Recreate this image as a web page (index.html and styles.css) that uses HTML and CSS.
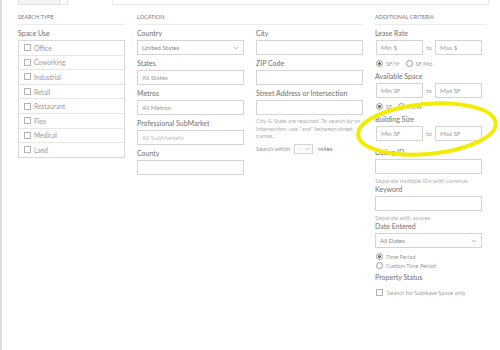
FILE: index.html
```html
<!DOCTYPE html>
<html lang="en">
<head>
  <meta charset="UTF-8">
  <meta name="viewport" content="width=device-width, initial-scale=1.0">
  <title>Property Search</title>
  <link rel="stylesheet" href="styles.css">
</head>
<body>
  <div class="page">
    <!-- Pestañas superiores (recortadas) -->
    <div class="topbar">
      <div class="tab"><span class="tab-fill"></span></div>
      <div class="tab-wide"></div>
    </div>

    <div class="search-form">
      <!-- Tipo de búsqueda -->
      <section class="group">
        <h2 class="group-title">Search Type</h2>
        <label class="field-label">Space Use</label>
        <ul class="check-list">
          <li><span class="checkbox"></span>Office</li>
          <li><span class="checkbox"></span>Coworking</li>
          <li><span class="checkbox"></span>Industrial</li>
          <li><span class="checkbox"></span>Retail</li>
          <li><span class="checkbox"></span>Restaurant</li>
          <li><span class="checkbox"></span>Flex</li>
          <li><span class="checkbox"></span>Medical</li>
          <li><span class="checkbox"></span>Land</li>
        </ul>
      </section>

      <!-- Ubicación -->
      <section class="group group-location">
        <h2 class="group-title">Location</h2>
        <div class="location-cols">
          <div class="col">
            <label class="field-label">Country</label>
            <div class="select field">
              <span>United States</span>
              <svg class="chevron" viewBox="0 0 10 6"><polyline points="1,1 5,5 9,1"/></svg>
            </div>
            <label class="field-label">States</label>
            <input class="field" type="text" placeholder="All States">
            <label class="field-label">Metros</label>
            <input class="field" type="text" placeholder="All Metros">
            <label class="field-label">Professional SubMarket</label>
            <input class="field field-muted" type="text" placeholder="All SubMarkets">
            <label class="field-label">County</label>
            <input class="field" type="text">
          </div>
          <div class="col">
            <label class="field-label">City</label>
            <input class="field" type="text">
            <label class="field-label">ZIP Code</label>
            <input class="field" type="text">
            <label class="field-label">Street Address or Intersection</label>
            <input class="field field-last" type="text">
            <p class="help help-street">City &amp; State are required. To search by an intersection, use "and" between street names.</p>
            <div class="within-row">
              <span>Search within</span>
              <div class="select select-small">
                <span>-</span>
                <svg class="chevron" viewBox="0 0 10 6"><polyline points="1,1 5,5 9,1"/></svg>
              </div>
              <span class="miles">miles</span>
            </div>
          </div>
        </div>
      </section>

      <!-- Criterios adicionales -->
      <section class="group">
        <h2 class="group-title">Additional Criteria</h2>

        <label class="field-label">Lease Rate</label>
        <div class="range-row">
          <input class="field" type="text" placeholder="Min $">
          <span class="to">to</span>
          <input class="field" type="text" placeholder="Max $">
        </div>
        <div class="radio-row">
          <span class="option"><span class="radio checked"></span>SF/Yr</span>
          <span class="option"><span class="radio"></span>SF/Mo</span>
        </div>

        <label class="field-label">Available Space</label>
        <div class="range-row">
          <input class="field" type="text" placeholder="Min SF">
          <span class="to">to</span>
          <input class="field" type="text" placeholder="Max SF">
        </div>
        <div class="radio-row">
          <span class="option"><span class="radio checked"></span>SF</span>
          <span class="option"><span class="radio"></span>Acres</span>
        </div>

        <label class="field-label">Building Size</label>
        <div class="range-row range-last">
          <input class="field" type="text" placeholder="Min SF">
          <span class="to">to</span>
          <input class="field" type="text" placeholder="Max SF">
        </div>

        <label class="field-label">Listing ID</label>
        <input class="field field-help" type="text">
        <p class="help">Separate multiple IDs with commas</p>

        <label class="field-label">Keyword</label>
        <input class="field field-help" type="text">
        <p class="help">Separate with spaces</p>

        <label class="field-label">Date Entered</label>
        <div class="select field field-last">
          <span>All Dates</span>
          <svg class="chevron" viewBox="0 0 10 6"><polyline points="1,1 5,5 9,1"/></svg>
        </div>
        <div class="radio-stack">
          <span class="option"><span class="radio checked"></span>Time Period</span>
          <span class="option"><span class="radio"></span>Custom Time Period</span>
        </div>

        <label class="field-label">Property Status</label>
        <div class="check-row"><span class="checkbox"></span>Search for Sublease Space only</div>
      </section>
    </div>
  </div>

  <!-- Marca amarilla sobre "Building Size" -->
  <svg class="highlight" viewBox="0 0 500 350">
    <ellipse cx="427" cy="129" rx="69" ry="25" transform="rotate(-5 427 129)"/>
  </svg>
</body>
</html>
```

FILE: styles.css
```css
/* Estilos generales */
body {
  margin: 0;
  font-family: "Lato", "Liberation Sans", sans-serif;
  color: #666;
  background: #fff;
}

.page {
  border-left: 2px solid #dcdcdc;
  padding-left: 16px;
  min-height: 350px;
  box-sizing: border-box;
}

/* Pestañas superiores */
.topbar {
  display: flex;
  height: 5px;
}

.tab {
  width: 48px;
  height: 4px;
  border: 1px solid #e2e2e2;
  border-top: none;
  display: flex;
}

.tab-fill {
  width: 40px;
  background-color: #f3f3f3;
  border-right: 1px solid #e2e2e2;
}

.tab-wide {
  margin-left: 44px;
  width: 375px;
  height: 4px;
  border: 1px solid #e6e6e6;
  border-top: none;
}

/* Rejilla principal */
.search-form {
  display: grid;
  grid-template-columns: 107px 226px 112px;
  column-gap: 12px;
}

.location-cols {
  display: grid;
  grid-template-columns: 107px 107px;
  column-gap: 12px;
}

.group-title {
  margin: 9px 0 4px;
  padding-bottom: 3px;
  font-size: 5.5px;
  line-height: 7px;
  font-weight: normal;
  text-transform: uppercase;
  color: #777;
  border-bottom: 1px solid #ececec;
}

.field-label {
  display: block;
  font-size: 7px;
  line-height: 9px;
  color: #707070;
  margin-bottom: 2px;
}

/* Campos */
.field {
  display: block;
  width: 107px;
  height: 15px;
  box-sizing: border-box;
  margin: 0 0 4px;
  padding: 0 4px;
  border: 1px solid #d4d4d4;
  border-radius: 0;
  font-family: inherit;
  font-size: 6.3px;
  color: #888;
  background: #fff;
}

.field::placeholder {
  color: #9a9a9a;
}

.field-muted::placeholder {
  color: #c0c0c0;
}

.field-last {
  margin-bottom: 2px;
}

.field-help {
  margin-bottom: 3px;
}

.select {
  display: flex;
  align-items: center;
  justify-content: space-between;
}

.chevron {
  width: 6px;
  height: 4px;
  fill: none;
  stroke: #888;
  stroke-width: 1;
}

/* Lista de tipos */
.check-list {
  list-style: none;
  margin: 0;
  padding: 0;
  border: 1px solid #d8d8d8;
}

.check-list li {
  display: flex;
  align-items: center;
  height: 13.6px;
  padding-left: 5px;
  font-size: 6.6px;
  color: #999;
  border-bottom: 1px solid #e6e6e6;
}

.check-list li:last-child {
  border-bottom: none;
}

.checkbox {
  width: 5px;
  height: 5px;
  border: 1px solid #b5b5b5;
  margin-right: 3px;
  flex-shrink: 0;
}

/* Textos de ayuda */
.help {
  margin: 0 0 1px;
  font-size: 6px;
  line-height: 7px;
  color: #b0b0b0;
}

.help-street {
  font-size: 5.8px;
  line-height: 7.5px;
  margin-bottom: 4px;
}

.within-row {
  display: flex;
  align-items: center;
  height: 10px;
  font-size: 5.8px;
  color: #999;
}

.select-small {
  width: 19px;
  height: 10px;
  box-sizing: border-box;
  border: 1px solid #d4d4d4;
  margin: 0 5px 0 4px;
  padding: 0 2px 0 4px;
  color: #999;
}

.select-small .chevron {
  width: 5px;
}

.miles {
  font-size: 6.3px;
  color: #777;
}

/* Rangos min/max */
.range-row {
  display: flex;
  align-items: center;
  width: 106px;
  margin-left: 1px;
  margin-bottom: 4px;
}

.range-row .field {
  width: 47px;
  margin: 0;
}

.range-last {
  margin-bottom: 7px;
}

.to {
  width: 12px;
  text-align: center;
  font-size: 5.8px;
  color: #999;
}

/* Radios */
.radio-row {
  display: flex;
  gap: 6px;
  height: 8px;
  align-items: center;
  margin-bottom: 5px;
  padding-left: 1px;
}

.radio-stack {
  display: flex;
  flex-direction: column;
  margin: 3.5px 0 3px 1px;
}

.radio-stack .option {
  height: 9px;
}

.option {
  display: flex;
  align-items: center;
  font-size: 5.6px;
  color: #999;
}

.radio {
  width: 5px;
  height: 5px;
  border: 1px solid #999;
  border-radius: 50%;
  margin-right: 3px;
  position: relative;
}

.radio.checked::after {
  content: "";
  position: absolute;
  left: 1px;
  top: 1px;
  width: 3px;
  height: 3px;
  border-radius: 50%;
  background-color: #666;
}

.check-row {
  display: flex;
  align-items: center;
  height: 7px;
  margin: 7px 0 0 1px;
  font-size: 5.8px;
  color: #a5a5a5;
}

.check-row .checkbox {
  margin-right: 4px;
}

/* Marca amarilla */
.highlight {
  position: absolute;
  left: 0;
  top: 0;
  width: 500px;
  height: 350px;
  pointer-events: none;
}

.highlight ellipse {
  fill: none;
  stroke: #f2ec00;
  stroke-width: 4;
}
```
